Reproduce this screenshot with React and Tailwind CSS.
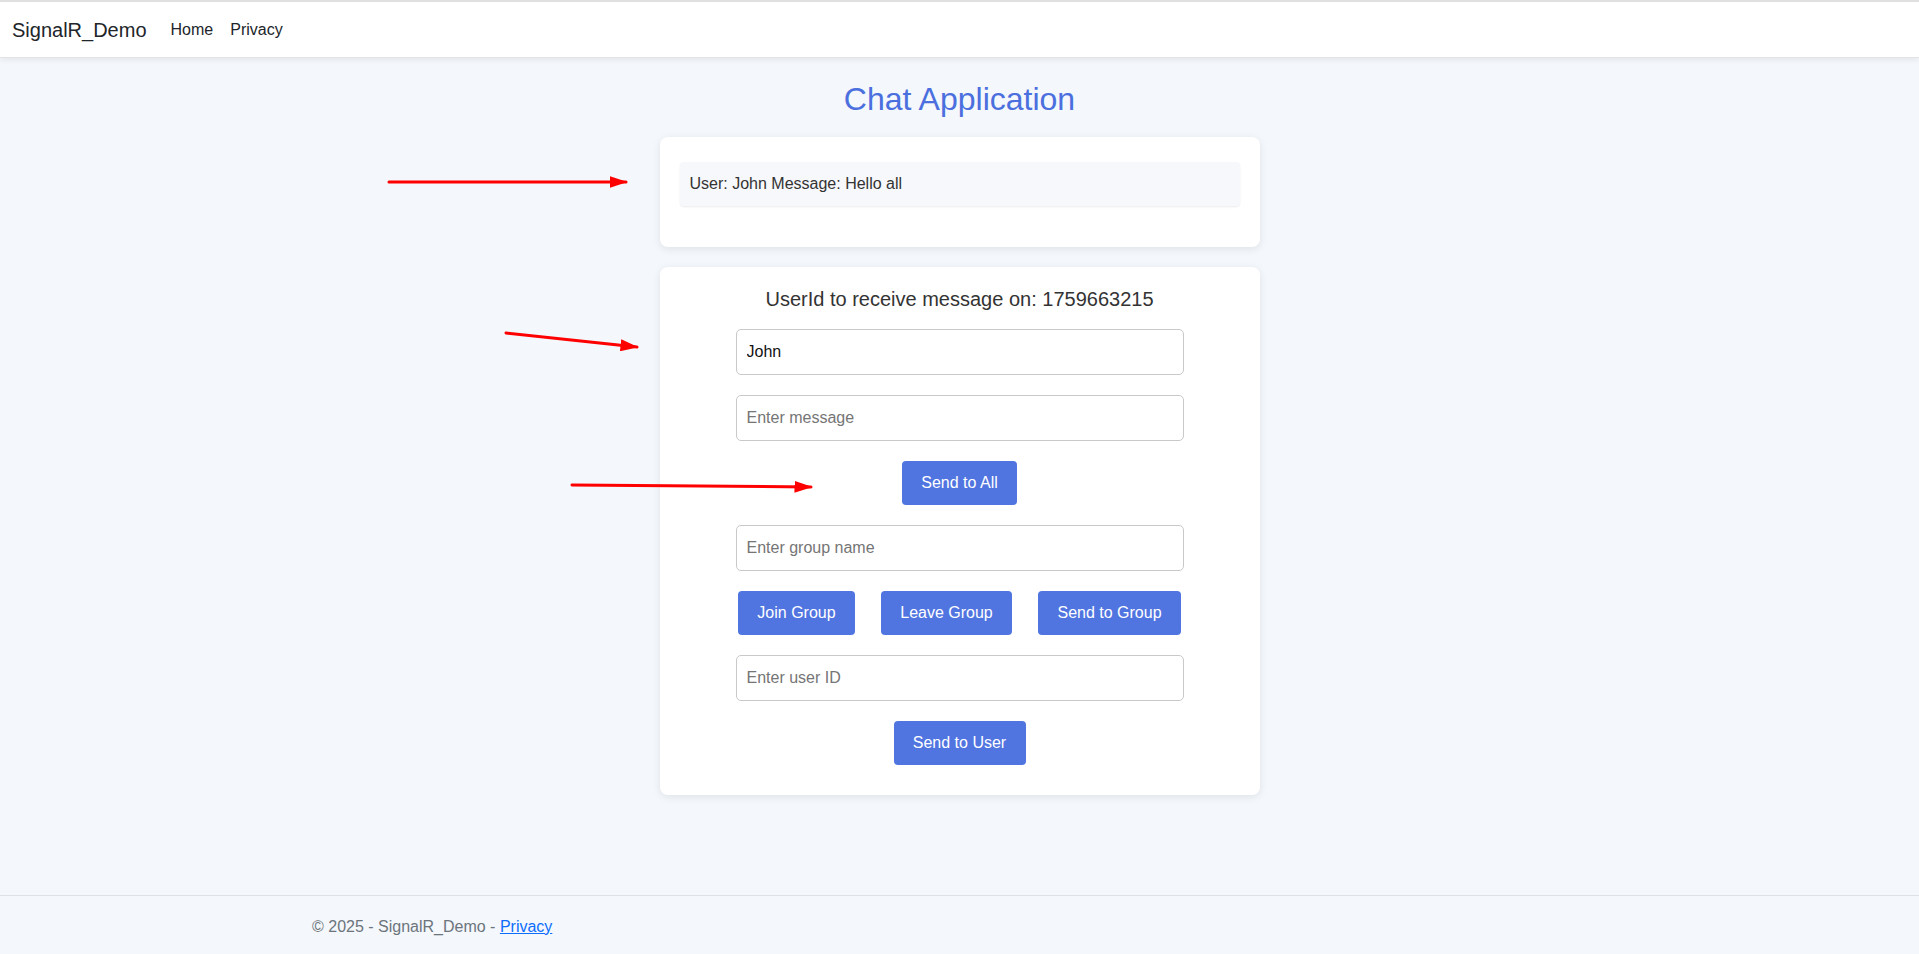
import React from "react";

// red annotation arrows drawn over the screenshot
function Arrows() {
  const arrows = [
    { x1: 389, y1: 182, x2: 628, y2: 182 },
    { x1: 506, y1: 333, x2: 639, y2: 347 },
    { x1: 572, y1: 485, x2: 813, y2: 487 },
  ];
  return (
    <svg className="absolute inset-0 pointer-events-none" width="1919" height="954">
      <defs>
        <marker id="head" markerWidth="6" markerHeight="4" refX="5.5" refY="2" orient="auto" markerUnits="strokeWidth">
          <polygon points="0 0, 6 2, 0 4" fill="#ff0000" />
        </marker>
      </defs>
      {arrows.map((a, i) => (
        <line
          key={i}
          x1={a.x1}
          y1={a.y1}
          x2={a.x2 - 2}
          y2={a.y2}
          stroke="#ff0000"
          strokeWidth="3"
          strokeLinecap="round"
          markerEnd="url(#head)"
        />
      ))}
    </svg>
  );
}

function Field({ placeholder, defaultValue }) {
  return (
    <input
      type="text"
      defaultValue={defaultValue}
      placeholder={placeholder}
      className="w-[448px] h-[46px] px-[10px] rounded-[5px] border border-[#c9c9c9] bg-white text-[16px] text-[#111] placeholder:text-[#757575] outline-none"
    />
  );
}

function Btn({ children, w }) {
  return (
    <button
      type="button"
      className={`${w} h-[44px] rounded-[4px] bg-[#5074e0] text-white text-[16px]`}
    >
      {children}
    </button>
  );
}

export default function App() {
  return (
    <div className="relative min-h-screen flex flex-col bg-[#f4f7fb] font-['Liberation_Sans',Arial,sans-serif]">
      {/* 네비게이션 */}
      <nav className="h-[58px] bg-white border-t-2 border-[#e0e0e0] shadow-[0_2px_6px_rgba(0,0,0,0.07)] border-b border-b-[#e3e3e3] flex items-center px-3">
        <span className="text-[20px] text-[#212529] mr-6">SignalR_Demo</span>
        <a className="text-[16px] text-[#212529] mr-[17px]">Home</a>
        <a className="text-[16px] text-[#212529]">Privacy</a>
      </nav>

      {/* 본문 */}
      <main className="flex-1 flex flex-col items-center">
        <h1 className="mt-[22px] text-[32px] leading-[1.2] text-[#4b6fde]">Chat Application</h1>

        <div className="mt-[19px] w-[600px] bg-white rounded-[8px] shadow-[0_2px_8px_rgba(0,0,0,0.09)] px-5 pt-[25px] pb-[41px]">
          <div className="h-[44px] flex items-center px-[10px] rounded-[4px] bg-[#f7f8fb] shadow-[0_1px_2px_rgba(0,0,0,0.08)] text-[16px] text-[#333]">
            User: John Message: Hello all
          </div>
        </div>

        <div className="mt-[20px] w-[600px] bg-white rounded-[8px] shadow-[0_2px_8px_rgba(0,0,0,0.09)] pt-[20px] pb-[30px] flex flex-col items-center">
          <h3 className="text-[20px] leading-[1.2] text-[#333]">UserId to receive message on: 1759663215</h3>
          <div className="mt-[18px]">
            <Field defaultValue="John" />
          </div>
          <div className="mt-[20px]">
            <Field placeholder="Enter message" />
          </div>
          <div className="mt-[20px]">
            <Btn w="w-[115px]">Send to All</Btn>
          </div>
          <div className="mt-[20px]">
            <Field placeholder="Enter group name" />
          </div>
          <div className="mt-[20px] flex gap-[26px]">
            <Btn w="w-[117px]">Join Group</Btn>
            <Btn w="w-[131px]">Leave Group</Btn>
            <Btn w="w-[143px]">Send to Group</Btn>
          </div>
          <div className="mt-[20px]">
            <Field placeholder="Enter user ID" />
          </div>
          <div className="mt-[20px]">
            <Btn w="w-[132px]">Send to User</Btn>
          </div>
        </div>
      </main>

      {/* 푸터 */}
      <footer className="h-[59px] border-t border-[#dee2e6] pl-[312px] pt-[19px] text-[16px] leading-[24px] text-[#6c757d]">
        © 2025 - SignalR_Demo - <a className="text-[#0d6efd] underline">Privacy</a>
      </footer>

      <Arrows />
    </div>
  );
}
